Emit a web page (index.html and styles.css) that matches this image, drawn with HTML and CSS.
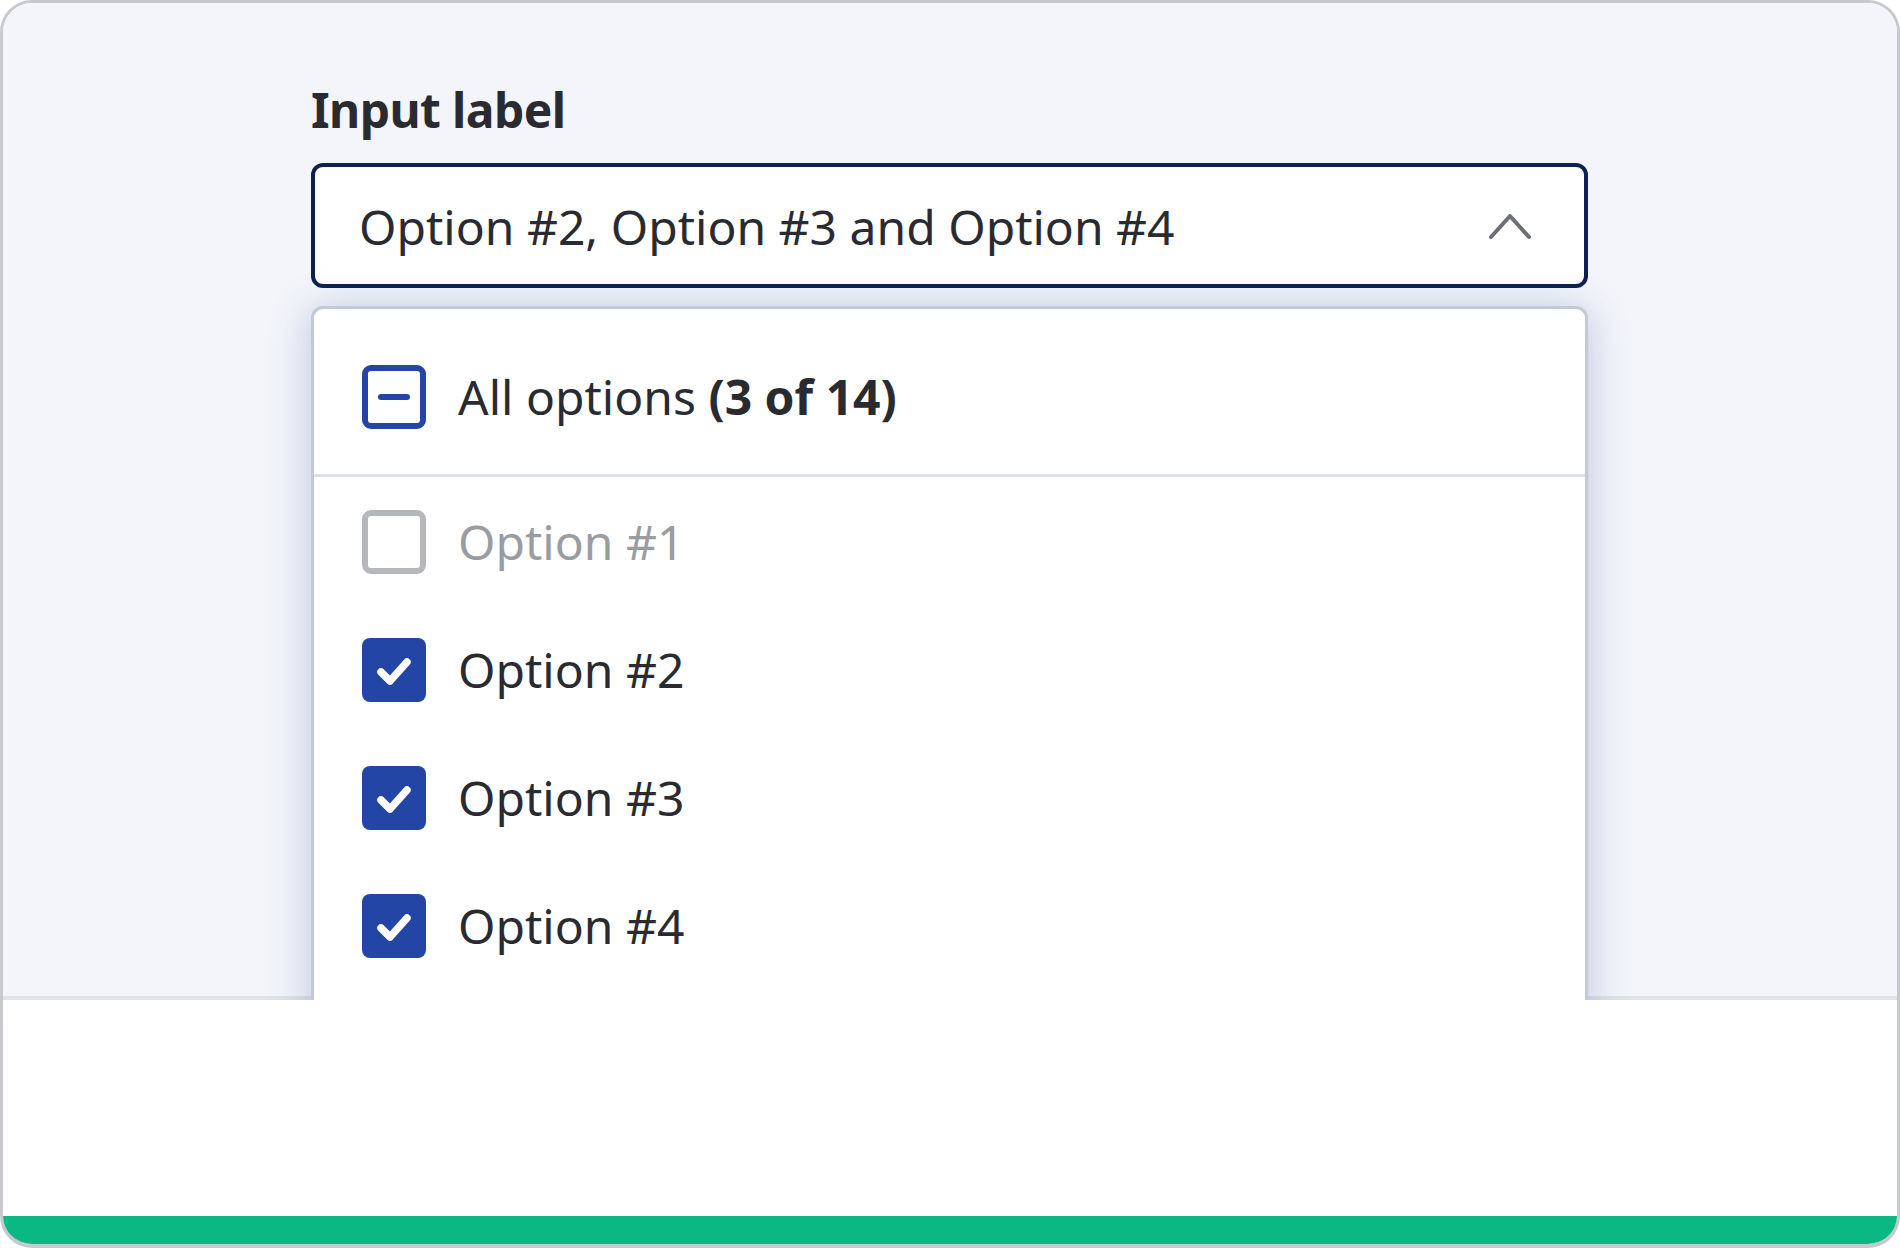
FILE: index.html
```html
<!DOCTYPE html>
<html lang="en">
<head>
<meta charset="utf-8">
<title>Multi-select</title>
<link rel="stylesheet" href="styles.css">
</head>
<body>
<div class="frame">
  <div class="stage">
    <div class="field">
      <label class="field-label">Input label</label>
      <div class="select">
        <span class="select-value">Option #2, Option #3 and Option #4</span>
        <svg class="chevron" width="46" height="30" viewBox="0 0 46 30"><polyline points="4,26 23,5 42,26" fill="none" stroke="#6d6f76" stroke-width="4" stroke-linecap="round" stroke-linejoin="round"/></svg>
      </div>
      <div class="panel">
        <div class="row row-all">
          <svg class="box" width="64" height="64" viewBox="0 0 64 64"><rect x="3" y="3" width="58" height="58" rx="6" fill="#fff" stroke="#2345a5" stroke-width="6"/><line x1="19" y1="32" x2="45" y2="32" stroke="#2345a5" stroke-width="6" stroke-linecap="round"/></svg>
          <span class="row-text">All options <b>(3 of 14)</b></span>
        </div>
        <div class="options">
          <div class="row disabled">
            <svg class="box" width="64" height="64" viewBox="0 0 64 64"><rect x="3" y="3" width="58" height="58" rx="6" fill="#fff" stroke="#b6b7bb" stroke-width="6"/></svg>
            <span class="row-text">Option #1</span>
          </div>
          <div class="row">
            <svg class="box" width="64" height="64" viewBox="0 0 64 64"><rect x="0" y="0" width="64" height="64" rx="8" fill="#2345a5"/><polyline points="19,34 28,43 45,24" fill="none" stroke="#fff" stroke-width="7.5" stroke-linecap="round" stroke-linejoin="round"/></svg>
            <span class="row-text">Option #2</span>
          </div>
          <div class="row">
            <svg class="box" width="64" height="64" viewBox="0 0 64 64"><rect x="0" y="0" width="64" height="64" rx="8" fill="#2345a5"/><polyline points="19,34 28,43 45,24" fill="none" stroke="#fff" stroke-width="7.5" stroke-linecap="round" stroke-linejoin="round"/></svg>
            <span class="row-text">Option #3</span>
          </div>
          <div class="row">
            <svg class="box" width="64" height="64" viewBox="0 0 64 64"><rect x="0" y="0" width="64" height="64" rx="8" fill="#2345a5"/><polyline points="19,34 28,43 45,24" fill="none" stroke="#fff" stroke-width="7.5" stroke-linecap="round" stroke-linejoin="round"/></svg>
            <span class="row-text">Option #4</span>
          </div>
        </div>
      </div>
    </div>
  </div>
  <div class="footer"></div>
  <div class="bar"></div>
</div>
</body>
</html>
```

FILE: styles.css
```css
* { box-sizing: border-box; }

html, body {
  margin: 0;
  padding: 0;
  background: #ffffff;
}

body {
  font-family: "Noto Sans", "Open Sans", "Liberation Sans", sans-serif;
  color: #2a2b30;
}

.frame {
  width: 1900px;
  height: 1248px;
  border: 3px solid #c8c9ce;
  border-bottom-width: 4px;
  border-radius: 32px;
  overflow: hidden;
  display: flex;
  flex-direction: column;
  background: #ffffff;
}

.stage {
  height: 997px;
  flex: none;
  background: #f3f5fa;
  box-shadow: inset 0 -4px 0 #e2e3e7;
  overflow: hidden;
  padding: 74px 0 0 308px;
}

.field {
  width: 1277px;
  display: flex;
  flex-direction: column;
}

.field-label {
  display: block;
  font-size: 48px;
  font-weight: 700;
  line-height: 66px;
  height: 66px;
  margin-bottom: 20px;
  letter-spacing: -0.6px;
}

.select {
  height: 125px;
  border: 4px solid #0f2150;
  border-radius: 12px;
  background: #ffffff;
  display: flex;
  align-items: center;
  justify-content: space-between;
  padding: 0 51px 0 44px;
}

.select-value {
  font-size: 48px;
  line-height: 66px;
  margin-top: 2px;
}

.chevron {
  display: block;
  flex: none;
}

.panel {
  margin-top: 18px;
  background: #ffffff;
  border: 3px solid #c4c9d8;
  border-radius: 12px;
  box-shadow: 0 4px 40px rgba(50, 70, 150, 0.28);
}

.options {
  padding-top: 1px;
  padding-bottom: 120px;
}

.row {
  display: flex;
  align-items: center;
  gap: 32px;
  height: 128px;
  padding: 0 48px;
}

.row-all {
  height: auto;
  padding-top: 56px;
  padding-bottom: 45px;
  border-bottom: 3px solid #dde1ec;
}

.box {
  display: block;
  flex: none;
}

.row-text {
  font-size: 48px;
  line-height: 64px;
}

.row-text b {
  font-weight: 700;
}

.disabled .row-text {
  color: #9b9ca1;
}

.footer {
  flex: 1;
  background: #ffffff;
}

.bar {
  height: 28px;
  flex: none;
  background: #0bb783;
}
```
